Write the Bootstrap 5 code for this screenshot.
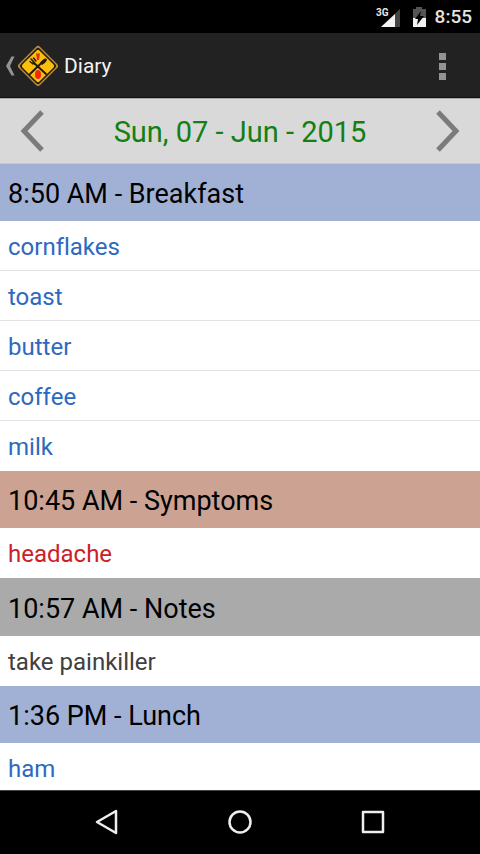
<!DOCTYPE html>
<html lang="en">
<head>
<meta charset="utf-8">
<meta name="viewport" content="width=device-width, initial-scale=1">
<title>Diary</title>
<link rel="stylesheet" href="https://cdn.jsdelivr.net/npm/bootstrap@5.3.0/dist/css/bootstrap.min.css">
<style>
  body { font-family: Roboto, "Noto Sans", sans-serif; line-height: 1.2; font-variant-ligatures: none; }
  svg { display: block; }
  .status-strip { height: 33px; font-size: 19px; font-weight: 500; color: #e4e4e4; padding-top: 2px; }
  .action-bar { height: 65px; background: #222; border-bottom: 1px solid #111; padding-top: 1px; }
  .action-title { font-size: 21px; font-weight: 400; color: #f3f3f3; padding-top: 2px; }
  .date-bar { height: 66px; background: #d9d9d9; border-top: 1px solid #aaa; border-bottom: 1px solid #c4c8d2; }
  .date-text { font-size: 29px; color: #128012; padding-top: 2px; }
  .diary { scrollbar-width: none; min-height: 0; }
  .section-head { height: 57px; font-size: 27px; font-weight: 400; color: #000; padding-top: 4px; }
  .meal-head { background: #a0b1d5; }
  .symptom-head { background: #cca392; }
  .note-head { height: 58px; background: #aaa; }
  .entry { height: 50px; font-size: 24px; border-bottom: 1px solid #e2e2e2; padding-top: 3px; }
  .entry:last-child { border-bottom: 0; }
  .entry-food, .entry-food:hover { color: #2d69c0; }
  .entry-symptom, .entry-symptom:hover { color: #cc2027; }
  .entry-note, .entry-note:hover { color: #404040; }
  .nav-strip { height: 64px; border-top: 1px solid #444; padding: 0 40px 2px; }
</style>
<script src="https://cdn.jsdelivr.net/npm/bootstrap@5.3.0/dist/js/bootstrap.bundle.min.js"></script>
</head>
<body class="vh-100 d-flex flex-column bg-white">
  <div class="status-strip bg-black d-flex align-items-center justify-content-end flex-shrink-0 px-2">
    <svg class="me-2" width="28" height="24" viewBox="0 0 28 24" role="img" aria-label="3G signal">
      <path d="M27 3V21H8Z" fill="#444"/><path d="M22 8V21H8Z" fill="#f2f2f2"/>
      <text x="3" y="10" font-size="10" font-weight="700" fill="#e8e8e8">3G</text>
    </svg>
    <svg class="me-1" width="18" height="24" viewBox="0 0 18 24" role="img" aria-label="Battery charging">
      <path d="M4 3H7V1H13V3H17V21H4Z" fill="#555"/><path d="M4 12H17V21H4Z" fill="#f2f2f2"/>
      <path d="M12 5L6 13H9L8 19L15 10H11Z" fill="#000"/>
    </svg>
    <span class="ps-1">8:55</span>
  </div>

  <header class="action-bar d-flex align-items-center justify-content-between flex-shrink-0">
    <div class="d-flex align-items-center">
      <button type="button" class="btn p-0 border-0 d-flex align-items-center" aria-label="Back">
        <svg width="60" height="44" viewBox="0 0 60 44">
          <path d="M11.500 12.500H14.500L10 22L14.500 31.500H11.500L6 22Z" fill="#939393"/>
          <rect x="23" y="7" width="30" height="30" rx="3" transform="rotate(45 38 22)" fill="#b98b3c"/>
          <rect x="24.500" y="8.500" width="27" height="27" rx="2.500" transform="rotate(45 38 22)" fill="#211a0d"/>
          <rect x="26" y="10" width="24" height="24" rx="2" transform="rotate(45 38 22)" fill="#fbbf0b"/>
          <path d="M36 9.500H40L39 16H37Z" fill="#e4321b"/>
          <path d="M30 30L45 15.500M46 30L34 19" stroke="#241b0b" stroke-width="2" stroke-linecap="round"/>
          <path d="M31 15L34 18M33.500 14L36 17M30 17.500L33 20M33 18L35 20" stroke="#241b0b" stroke-width="1.500" stroke-linecap="round"/>
          <path d="M40 19Q44 14 47 15Q47 18 42 21Z" fill="#241b0b"/>
          <ellipse cx="38" cy="30.500" rx="3" ry="4.500" fill="#f02813"/>
        </svg>
      </button>
      <h1 class="action-title mb-0 ms-1">Diary</h1>
    </div>
    <button type="button" class="btn border-0 p-0 me-4" aria-label="More options">
      <svg width="27" height="40" viewBox="0 0 27 40"><path d="M10 7H17V14H10ZM10 17H17V24H10ZM10 27H17V34H10Z" fill="#939393"/></svg>
    </button>
  </header>

  <div class="date-bar d-flex align-items-center justify-content-between flex-shrink-0 px-2">
    <button type="button" class="btn border-0 p-0" aria-label="Previous day">
      <svg width="48" height="48" viewBox="0 0 48 48"><path d="M34 5L16 24L34 43" fill="none" stroke="#7b7b7b" stroke-width="5"/></svg>
    </button>
    <time class="date-text" datetime="2015-06-07">Sun, 07 - Jun - 2015</time>
    <button type="button" class="btn border-0 p-0" aria-label="Next day">
      <svg width="48" height="48" viewBox="0 0 48 48"><path d="M14 5L32 24L14 43" fill="none" stroke="#7b7b7b" stroke-width="5"/></svg>
    </button>
  </div>

  <main class="diary flex-grow-1 overflow-auto">
    <section>
      <h2 class="section-head meal-head d-flex align-items-center mb-0 px-2">8:50 AM - Breakfast</h2>
      <a href="#" class="entry entry-food d-flex align-items-center px-2 text-decoration-none">cornflakes</a>
      <a href="#" class="entry entry-food d-flex align-items-center px-2 text-decoration-none">toast</a>
      <a href="#" class="entry entry-food d-flex align-items-center px-2 text-decoration-none">butter</a>
      <a href="#" class="entry entry-food d-flex align-items-center px-2 text-decoration-none">coffee</a>
      <a href="#" class="entry entry-food d-flex align-items-center px-2 text-decoration-none">milk</a>
    </section>
    <section>
      <h2 class="section-head symptom-head d-flex align-items-center mb-0 px-2">10:45 AM - Symptoms</h2>
      <a href="#" class="entry entry-symptom d-flex align-items-center px-2 text-decoration-none">headache</a>
    </section>
    <section>
      <h2 class="section-head note-head d-flex align-items-center mb-0 px-2">10:57 AM - Notes</h2>
      <a href="#" class="entry entry-note d-flex align-items-center px-2 text-decoration-none">take painkiller</a>
    </section>
    <section>
      <h2 class="section-head meal-head d-flex align-items-center mb-0 px-2">1:36 PM - Lunch</h2>
      <a href="#" class="entry entry-food d-flex align-items-center px-2 text-decoration-none">ham</a>
    </section>
  </main>

  <nav class="nav-strip bg-black d-flex flex-shrink-0" aria-label="System">
    <button type="button" class="btn border-0 p-0 flex-fill d-flex align-items-center justify-content-center" aria-label="Back">
      <svg width="30" height="30" viewBox="0 0 30 30" fill="none" stroke="#eee" stroke-width="2.500" stroke-linejoin="round"><path d="M24 4V26L5 15Z"/></svg>
    </button>
    <button type="button" class="btn border-0 p-0 flex-fill d-flex align-items-center justify-content-center" aria-label="Home">
      <svg width="30" height="30" viewBox="0 0 30 30" fill="none" stroke="#eee" stroke-width="2.500"><circle cx="15" cy="15" r="10.500"/></svg>
    </button>
    <button type="button" class="btn border-0 p-0 flex-fill d-flex align-items-center justify-content-center" aria-label="Recent apps">
      <svg width="30" height="30" viewBox="0 0 30 30" fill="none" stroke="#eee" stroke-width="2.500" stroke-linejoin="round"><rect x="5" y="5" width="20" height="20"/></svg>
    </button>
  </nav>
</body>
</html>
